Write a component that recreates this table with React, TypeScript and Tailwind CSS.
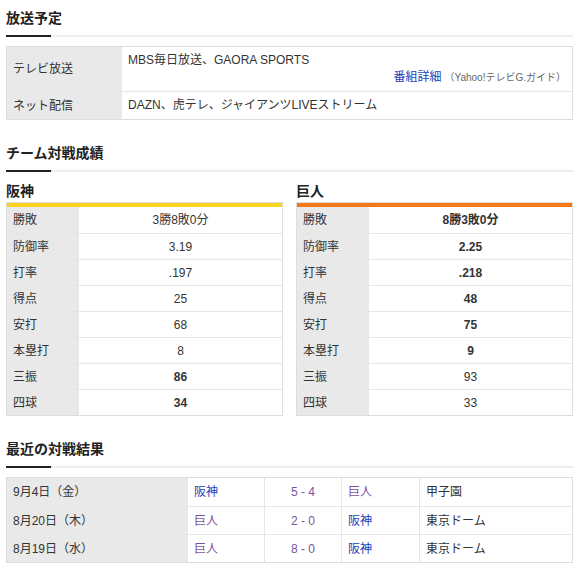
const font = {
  fontFamily: '"Liberation Sans", "Noto Sans CJK JP", sans-serif',
};

type Stat = { label: string; value: string; bold?: boolean };

const hanshin: Stat[] = [
  { label: "勝敗", value: "3勝8敗0分" },
  { label: "防御率", value: "3.19" },
  { label: "打率", value: ".197" },
  { label: "得点", value: "25" },
  { label: "安打", value: "68" },
  { label: "本塁打", value: "8" },
  { label: "三振", value: "86", bold: true },
  { label: "四球", value: "34", bold: true },
];

const giants: Stat[] = [
  { label: "勝敗", value: "8勝3敗0分", bold: true },
  { label: "防御率", value: "2.25", bold: true },
  { label: "打率", value: ".218", bold: true },
  { label: "得点", value: "48", bold: true },
  { label: "安打", value: "75", bold: true },
  { label: "本塁打", value: "9", bold: true },
  { label: "三振", value: "93" },
  { label: "四球", value: "33" },
];

const results = [
  { date: "9月4日（金）", home: "阪神", homeWin: true, score: "5 - 4", away: "巨人", awayWin: false, venue: "甲子園" },
  { date: "8月20日（木）", home: "巨人", homeWin: false, score: "2 - 0", away: "阪神", awayWin: true, venue: "東京ドーム" },
  { date: "8月19日（水）", home: "巨人", homeWin: false, score: "8 - 0", away: "阪神", awayWin: true, venue: "東京ドーム" },
];

const Heading = ({ title, className }: { title: string; className: string }) => (
  <div className={className}>
    <h2 className="text-[14px] font-bold leading-[20px] text-[#222]">{title}</h2>
    <div className="mt-[7px] flex">
      <div className="h-[2px] w-[45px] bg-[#222]" />
      <div className="h-[2px] flex-1 bg-[#eeeeee]" />
    </div>
  </div>
);

const TeamTable = ({ name, bar, stats }: { name: string; bar: string; stats: Stat[] }) => (
  <div className="w-[277px]">
    <h3 className="mt-[9px] text-[14px] font-bold leading-[20px] text-[#222]">{name}</h3>
    <div className="mt-[1px] border border-[#dddddd]">
      <div className={`h-[4px] ${bar}`} />
      {stats.map((s, i) => (
        <div key={s.label} className={`flex h-[26px] text-[12px] ${i > 0 ? "border-t border-[#e6e6e6]" : ""}`}>
          <div className="flex w-[72px] items-center bg-[#e9e9e9] pl-[6px]">{s.label}</div>
          <div className={`flex flex-1 items-center justify-center ${s.bold ? "font-bold" : ""}`}>{s.value}</div>
        </div>
      ))}
    </div>
  </div>
);

export default function App() {
  const blue = "text-[#1f3eb5]";
  const purple = "text-[#7a539c]";
  return (
    <div style={font} className="w-[586px] bg-white px-[6px] pt-[8px] pb-[6px] text-[#333]">
      <div className="w-[567px]">
        <Heading title="放送予定" className="" />

        {/* 放送予定 */}
        <div className="mt-[9px] border border-[#dddddd] text-[12px]">
          <div className="flex">
            <div className="flex w-[115px] items-center bg-[#e9e9e9] pl-[6px]">テレビ放送</div>
            <div className="flex-1 px-[6px] py-[5px] leading-[17px]">
              <div>MBS毎日放送、GAORA SPORTS</div>
              <div className="text-right">
                <span className={blue}>番組詳細</span>
                <span className="ml-[3px] text-[10px] text-[#666]">（Yahoo!テレビG.ガイド）</span>
              </div>
            </div>
          </div>
          <div className="flex border-t border-[#e6e6e6]">
            <div className="flex w-[115px] items-center bg-[#e9e9e9] pl-[6px]">ネット配信</div>
            <div className="flex-1 px-[6px] py-[5px] leading-[17px]">DAZN、虎テレ、ジャイアンツLIVEストリーム</div>
          </div>
        </div>

        {/* チーム対戦成績 */}
        <Heading title="チーム対戦成績" className="mt-[23px]" />
        <div className="flex gap-[13px]">
          <TeamTable name="阪神" bar="bg-[#fbd423]" stats={hanshin} />
          <TeamTable name="巨人" bar="bg-[#f07a1c]" stats={giants} />
        </div>

        {/* 最近の対戦結果 */}
        <Heading title="最近の対戦結果" className="mt-[23px]" />
        <div className="mt-[9px] border border-[#dddddd] text-[12px]">
          {results.map((r, i) => (
            <div key={r.date} className={`flex h-[28px] ${i > 0 ? "border-t border-[#e6e6e6]" : ""}`}>
              <div className="flex w-[180px] items-center bg-[#e9e9e9] pl-[6px]">{r.date}</div>
              <div className={`flex w-[77px] items-center border-l border-[#e6e6e6] pl-[6px] ${r.homeWin ? blue : purple}`}>{r.home}</div>
              <div className={`flex w-[77px] items-center justify-center border-l border-[#e6e6e6] ${purple}`}>{r.score}</div>
              <div className={`flex w-[78px] items-center border-l border-[#e6e6e6] pl-[6px] ${r.awayWin ? blue : purple}`}>{r.away}</div>
              <div className="flex flex-1 items-center border-l border-[#e6e6e6] pl-[6px]">{r.venue}</div>
            </div>
          ))}
        </div>
      </div>
    </div>
  );
}
